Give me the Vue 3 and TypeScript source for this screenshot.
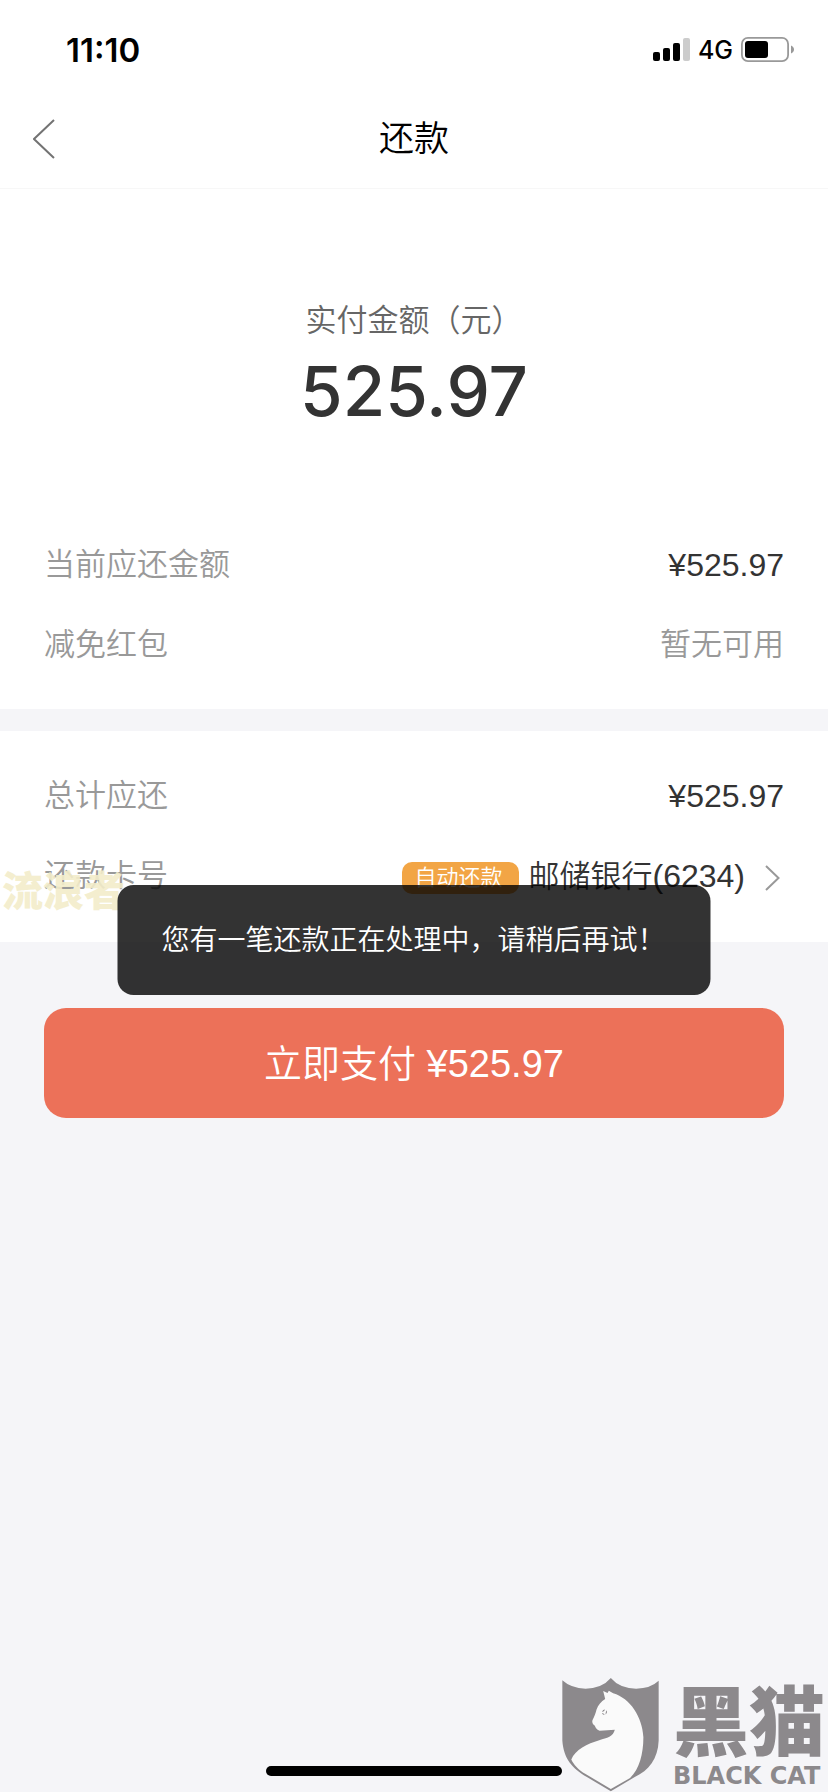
<script setup lang="ts">
interface Signal {
  x: number
  height: number
  active: boolean
}

const amount = '525.97'
const signals: Signal[] = [
  { x: 0, height: 9, active: true },
  { x: 10, height: 13, active: true },
  { x: 20, height: 18, active: true },
  { x: 30, height: 23, active: false },
]
</script>

<template>
  <div class="page">
    <header class="top">
      <div class="status">
        <span class="time">11:10</span>
        <div class="indicators">
          <svg class="signal" viewBox="0 0 37 23" aria-hidden="true">
            <rect
              v-for="s in signals"
              :key="s.x"
              :x="s.x"
              :y="23 - s.height"
              width="7"
              :height="s.height"
              rx="2"
              :fill="s.active ? '#000' : '#ccc'"
            />
          </svg>
          <span class="network">4G</span>
          <svg class="battery" viewBox="0 0 53 25" aria-hidden="true">
            <rect x="0.9" y="0.9" width="46.2" height="23.2" rx="6" fill="none" stroke="#999" stroke-width="1.8" />
            <rect x="4" y="4" width="23" height="17" rx="3" fill="#000" />
            <path d="M50 8.500C54 10 54 15 50 16.500Z" fill="#999" />
          </svg>
        </div>
      </div>
      <nav class="nav">
        <button class="back" type="button" aria-label="返回">
          <svg viewBox="0 0 22 40" aria-hidden="true">
            <path d="M21 1L1 20L21 39" fill="none" stroke="#737373" stroke-width="2" />
          </svg>
        </button>
        <h1 class="title">还款</h1>
      </nav>
    </header>

    <main>
      <section class="summary">
        <p class="caption">实付金额（元）</p>
        <p class="total">{{ amount }}</p>
        <dl class="rows">
          <div class="row">
            <dt>当前应还金额</dt>
            <dd class="number">¥{{ amount }}</dd>
          </div>
          <div class="row">
            <dt>减免红包</dt>
            <dd class="muted">暂无可用</dd>
          </div>
        </dl>
      </section>

      <section class="payment">
        <dl class="rows">
          <div class="row">
            <dt>总计应还</dt>
            <dd class="number">¥{{ amount }}</dd>
          </div>
          <div class="row">
            <dt>还款卡号</dt>
            <dd>
              <button class="card" type="button">
                <span class="tag">自动还款</span>
                <span>邮储银行<span class="number">(6234)</span></span>
                <svg class="chevron" viewBox="0 0 15 26" aria-hidden="true">
                  <path d="M1 1L13.500 13L1 25" fill="none" stroke="#999" stroke-width="2" />
                </svg>
              </button>
            </dd>
          </div>
        </dl>
        <span class="user-mark">流浪者</span>
        <div class="toast" role="status">您有一笔还款正在处理中，请稍后再试！</div>
      </section>

      <div class="actions">
        <button class="pay" type="button">立即支付 ¥{{ amount }}</button>
      </div>
    </main>

    <div class="home-bar"></div>
    <div class="brand">
      <svg class="shield" viewBox="57 50 292 344" aria-hidden="true">
        <path
          d="M58 59Q84 83 128 84Q178 83 204 52Q230 83 280 84Q324 83 348 60V240C346 296 318 330 276 350L204 393L132 350C88 324 62 296 58 240Z"
          fill="#8c898c"
        />
        <path
          d="M187 115L181 91L194 97L198 90L211 98C262 113 299 169 302 230C302 280 290 325 262 353L204 386L128 341C106 328 92 312 85 297C96 268 134 249 169 239C193 233 211 228 216 208L170 211C161 208 158 202 156 196C148 190 147 184 149 178C155 168 158 158 161 147C166 133 175 122 187 115Z"
          fill="#fafafa"
        />
        <path d="M177 154Q180 147 187 147L183 152ZM191 149Q195 156 188 162L189 154ZM177 157Q179 163 186 163L181 158Z" fill="#8c898c" />
      </svg>
      <div class="brand-text">
        <span class="brand-cn">黑猫</span>
        <span class="brand-en">BLACK CAT</span>
      </div>
    </div>
  </div>
</template>

<style>
body {
  margin: 0;
  background: #f5f5f8;
}
</style>

<style scoped>
.page {
  position: relative;
  min-height: 100vh;
  overflow: hidden;
  background: #f5f5f8;
  color: #333;
  font-family: "Liberation Sans", "Noto Sans CJK SC", sans-serif;
  font-size: 31px;
  font-weight: 350;
  line-height: 40px;
}

button {
  border: 0;
  padding: 0;
  background: none;
  color: inherit;
  font: inherit;
}

p,
h1,
dl,
dd {
  margin: 0;
}

.top {
  background: #fff;
  border-bottom: 1px solid #f7f7f7;
}

.status {
  display: flex;
  align-items: center;
  justify-content: space-between;
  height: 99px;
  padding: 0 34px 0 66px;
  color: #000;
  font-family: Inter, sans-serif;
}

.time {
  font-size: 33px;
  font-weight: 600;
}

.indicators {
  display: flex;
  align-items: center;
}

.signal {
  width: 37px;
  height: 23px;
}

.network {
  margin: 0 8px;
  font-size: 25px;
  font-weight: 500;
}

.battery {
  width: 53px;
  height: 25px;
}

.nav {
  display: grid;
  grid-template-columns: 1fr auto 1fr;
  align-items: center;
  height: 80px;
  padding: 0 33px 9px;
}

.back {
  justify-self: start;
  width: 22px;
  height: 40px;
}

.back svg,
.chevron {
  display: block;
}

.title {
  color: #000;
  font-size: 35px;
  font-weight: 350;
}

.summary {
  padding: 112px 44px 24px;
  background: #fff;
}

.caption {
  color: #666;
  text-align: center;
}

.total {
  margin: 2px 0 86px;
  font-family: Inter, sans-serif;
  font-size: 69px;
  font-weight: 500;
  line-height: 96px;
  text-align: center;
}

.row {
  display: flex;
  align-items: center;
  justify-content: space-between;
  height: 80px;
}

.row dt,
.muted {
  color: #999;
}

.number {
  font-size: 32px;
}

.payment {
  position: relative;
  margin-top: 22px;
  padding: 25px 44px 26px;
  background: #fff;
}

.card {
  display: flex;
  align-items: center;
}

.tag {
  margin: 4px 10px 0 0;
  padding: 0 16px 0 12px;
  border-radius: 10px;
  background: #f2a545;
  color: #fff;
  font-size: 22px;
  line-height: 32px;
}

.chevron {
  width: 15px;
  height: 26px;
  margin: 4px 4px 0 20px;
}

.user-mark {
  position: absolute;
  left: 2px;
  bottom: 30px;
  color: #f3edca;
  font-size: 41px;
  font-weight: 900;
  opacity: 0.9;
}

.toast {
  position: absolute;
  top: 154px;
  left: 50%;
  transform: translateX(-50%);
  padding: 0 45px 0 44px;
  border-radius: 16px;
  background: rgba(0, 0, 0, 0.8);
  color: #fff;
  font-size: 28px;
  line-height: 112px;
  height: 110px;
  white-space: nowrap;
}

.actions {
  padding: 66px 44px 0;
}

.pay {
  width: 100%;
  height: 110px;
  padding-top: 2px;
  border-radius: 22px;
  background: #ec7159;
  color: #fff;
  font-size: 38px;
}

.home-bar {
  position: absolute;
  bottom: 16px;
  left: 50%;
  width: 296px;
  height: 10px;
  transform: translateX(-50%);
  border-radius: 5px;
  background: #000;
}

.brand {
  position: absolute;
  right: 3px;
  bottom: 0;
  display: flex;
  align-items: flex-end;
  gap: 14px;
  color: #8c898c;
}

.shield {
  width: 97px;
  height: 115px;
}

.brand-text {
  display: flex;
  flex-direction: column;
  padding-bottom: 4px;
}

.brand-cn {
  font-size: 76px;
  font-weight: 900;
  line-height: 80px;
}

.brand-en {
  font-family: "DejaVu Sans", sans-serif;
  font-size: 24px;
  font-weight: 700;
  line-height: 24px;
}
</style>
